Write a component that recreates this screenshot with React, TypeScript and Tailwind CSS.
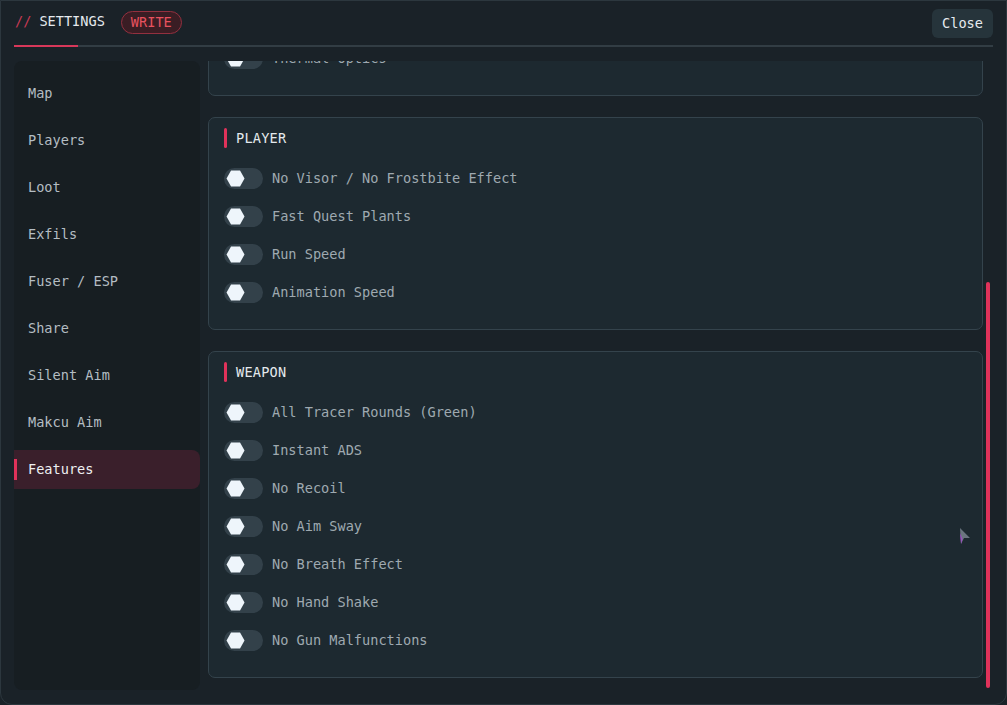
import React from "react";

const navItems = ["Map", "Players", "Loot", "Exfils", "Fuser / ESP", "Share", "Silent Aim", "Makcu Aim", "Features"];

const sections = [
    { id: "optics", title: "OPTICS", items: ["Thermal Optics"] },
    { id: "player", title: "PLAYER", items: ["No Visor / No Frostbite Effect", "Fast Quest Plants", "Run Speed", "Animation Speed"] },
    {
        id: "weapon",
        title: "WEAPON",
        items: [
            "All Tracer Rounds (Green)",
            "Instant ADS",
            "No Recoil",
            "No Aim Sway",
            "No Breath Effect",
            "No Hand Shake",
            "No Gun Malfunctions",
        ],
    },
];

const Toggle = () => (
    <div className="relative w-[39px] h-[21px] rounded-full bg-[#33414a] flex items-center pl-[2px] shrink-0">
        <svg width="19" height="17" viewBox="0 0 19 17">
            <polygon points="5,0.5 14,0.5 18.5,8.5 14,16.5 5,16.5 0.5,8.5" fill="#eef5fb" />
        </svg>
    </div>
);

const Card = ({ title, items }: { title: string; items: string[] }) => (
    <div className="rounded-[7px] border border-[#34434c] bg-[#1d2930] pt-[10px] px-[15px] pb-[26px]">
        <div className="flex items-center gap-[9px] h-[20px] mb-[20px]">
            <div className="w-[3px] h-[20px] rounded-full bg-[#e0325a]" />
            <span className="text-[#e4e9ed] tracking-[0.2px]">{title}</span>
        </div>
        <div className="flex flex-col gap-[17px]">
            {items.map((item) => (
                <div key={item} className="flex items-center gap-[9px] h-[21px]">
                    <Toggle />
                    <span className="text-[#9fa9b0]">{item}</span>
                </div>
            ))}
        </div>
    </div>
);

export default function App() {
    return (
        <div
            className="w-[1007px] h-[705px] bg-[#1a2228] text-[13.6px] overflow-hidden relative"
            style={{ fontFamily: '"DejaVu Sans Mono", "Liberation Mono", monospace' }}
        >
            <div className="h-full w-full rounded-b-[12px] border border-[#2c373e] flex flex-col px-[13px]">
                {/* header */}
                <div className="flex items-center justify-between h-[44px] pt-[1px]">
                    <div className="flex items-center gap-[16px] pl-[1px]">
                        <span className="text-[#e5eaee] -mt-[5px]">
                            <span className="text-[#c73a55] mr-[8px]">//</span>SETTINGS
                        </span>
                        <span className="h-[23px] px-[9px] rounded-full border border-[#93303f] bg-[#3a1d24] text-[#e8525f] flex items-center -mt-[3px]">
                            WRITE
                        </span>
                    </div>
                    <button className="h-[29px] w-[61px] rounded-[6px] bg-[#26343b] text-[#e6ebef]">Close</button>
                </div>
                <div className="relative h-[2px] bg-[#323d44]">
                    <div className="absolute left-0 top-0 h-[2px] w-[64px] bg-[#d8385a]" />
                </div>

                {/* body */}
                <div className="flex flex-1 min-h-0 gap-[8px] pt-[14px] pb-[14px]">
                    <div className="w-[186px] shrink-0 rounded-[8px] bg-[#171e22] pt-[13px] flex flex-col gap-[8px]">
                        {navItems.map((n) => {
                            const active = n === "Features";
                            return (
                                <div
                                    key={n}
                                    className={`relative h-[39px] flex items-center pl-[14px] rounded-r-[8px] ${
                                        active ? "bg-[#3a1f2b] text-[#eef0f2]" : "text-[#b4bdc3]"
                                    }`}
                                >
                                    {active && <div className="absolute left-0 top-[9px] w-[3px] h-[21px] bg-[#e0325a]" />}
                                    {n}
                                </div>
                            );
                        })}
                    </div>

                    <div className="flex-1 min-w-0 flex gap-[3px]">
                        <div className="flex-1 min-w-0 overflow-hidden">
                            <div className="flex flex-col gap-[21px] -mt-[64px]">
                                {sections.map((s) => (
                                    <Card key={s.id} title={s.title} items={s.items} />
                                ))}
                            </div>
                        </div>
                        <div className="w-[4px] shrink-0 pt-[221px] mb-[2px] mr-[3px]">
                            <div className="h-full rounded-full bg-[#e0325a]" />
                        </div>
                    </div>
                </div>
            </div>

            {/* mouse cursor */}
            <svg className="absolute left-[959px] top-[527px]" width="12" height="18" viewBox="0 0 12 18">
                <polygon points="1,1 11,11 5,11 2,17" fill="#6b7680" />
                <polygon points="1,6 2,17 3.5,12" fill="#9b4fc0" />
            </svg>
        </div>
    );
}
